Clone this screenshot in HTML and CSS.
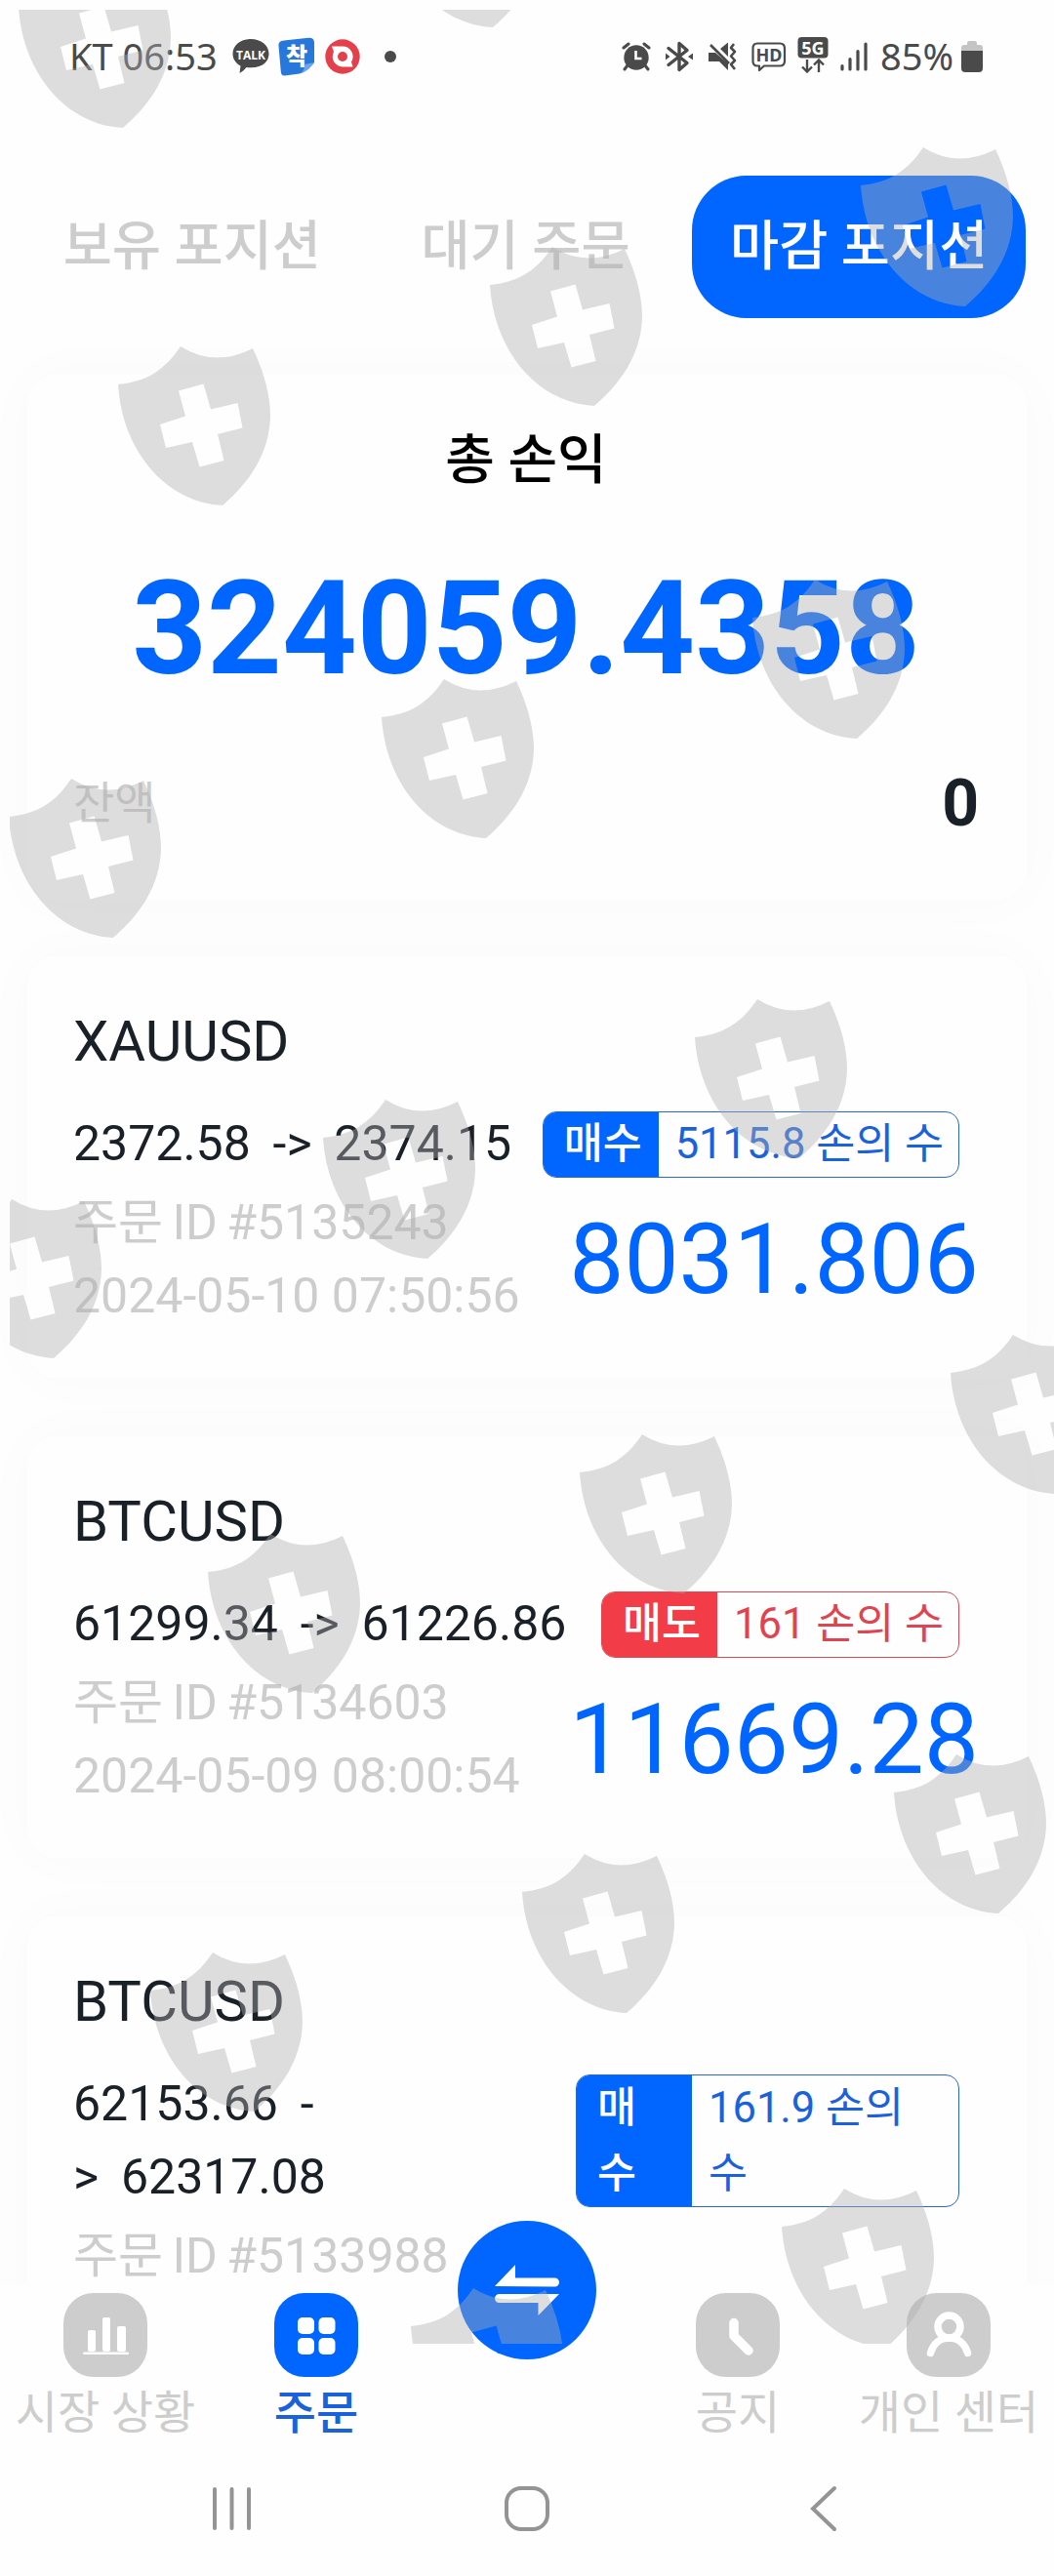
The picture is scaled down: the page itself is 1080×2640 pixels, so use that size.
FILE: index.html
```html
<!DOCTYPE html>
<html lang="ko">
<head>
    <meta charset="UTF-8">
    <meta name="viewport" content="width=device-width, initial-scale=1.0">
    <title>마감 포지션</title>
    <link rel="stylesheet" href="styles.css">
</head>
<body>
    <div class="phone">
        <!-- Status bar -->
        <header class="status-bar">
            <span class="status-time">KT 06:53</span>
            <svg class="ic-talk" width="38" height="38" viewBox="0 0 38 38">
                <path fill="#4a4a4a" d="M19 1C8.500 1 .5 7.500.5 16c0 5.500 3 9.700 8 12.500L7.500 36c2.500-1.500 5-3.500 7-6 16 1.800 23-5.500 23-14C37.500 7.500 29.500 1 19 1z"/>
                <text x="19" y="21.500" class="talk-text">TALK</text>
            </svg>
            <svg class="ic-app" width="38" height="40" viewBox="0 0 38 40">
                <path fill="#2878dc" d="M6 3.500L31 .7c4-.3 6 1.300 6 5V26c-5 6-9 9.500-15 11.500L7 39.500c-3 .2-4-1.500-4.200-4L.5 9C.3 5.500 2 3.900 6 3.500z"/>
                <path fill="#6aa5f0" d="M37 26c-4 6-9 10-15 11.500 4-2 5-5 5.500-9.500z"/>
                <text x="19" y="28" class="app-text">착</text>
            </svg>
            <svg class="ic-red" width="36" height="36" viewBox="0 0 36 36">
                <circle cx="18" cy="18" r="17.700" fill="#e3404c"/>
                <path fill="#fff" d="M7 7.500h11a10.500 10.500 0 0 1 9 16l1.500 5H18A10.500 10.500 0 0 1 9 13z"/>
                <circle cx="18" cy="18" r="5" fill="#e3404c"/>
            </svg>
            <span class="status-dot"></span>
            <div class="status-right">
                <svg class="ic-alarm" width="30" height="30" viewBox="0 0 30 30">
                    <g fill="none" stroke="#4a4a4a" stroke-width="3" stroke-linecap="round">
                        <path d="M2 6l5-4M28 6l-5-4M6 24l-3 4M24 24l3 4"/>
                    </g>
                    <circle cx="15" cy="16" r="12.700" fill="#4a4a4a"/>
                    <path d="M14.500 9v8h6" fill="none" stroke="#fff" stroke-width="2.600"/>
                </svg>
                <svg class="ic-bt" width="28" height="32" viewBox="0 0 28 32">
                    <path d="M3 7.500l19 15-8 7V2.500l8 7-19 15" fill="none" stroke="#4a4a4a" stroke-width="3.400" stroke-linejoin="round" stroke-linecap="round"/>
                    <path fill="#4a4a4a" d="M0 12.500l4.500 3.500L0 19.500zM28 12.500L23 16l5 3.500z"/>
                </svg>
                <svg class="ic-mute" width="31" height="30" viewBox="0 0 31 30">
                    <path fill="#4a4a4a" d="M1 11h7l13 11v7l-9-9H1zM13 7l8-6.500V15z"/>
                    <path d="M3 3l19 19M27 2l-3 4 4 4-4 4.500 4 4.500-4 4 4 5" fill="none" stroke="#4a4a4a" stroke-width="2.600" stroke-linejoin="round"/>
                </svg>
                <svg class="ic-hd" width="36" height="31" viewBox="0 0 36 31">
                    <path d="M6 1.500h23q5 0 5 5v13q0 5-5 5H13l-5 4.500v-4.500H6q-4.500 0-4.500-5v-13q0-5 4.500-5z" fill="none" stroke="#4a4a4a" stroke-width="2.200" stroke-linejoin="round"/>
                    <text x="18" y="20" class="hd-text">HD</text>
                </svg>
                <svg class="ic-5g" width="32" height="37" viewBox="0 0 32 37">
                    <rect x=".5" y="0" width="31" height="21.500" rx="4" fill="#4a4a4a"/>
                    <text x="16" y="17.500" class="g5-text">5G</text>
                    <path d="M10 23v12M5 30.500l5 5 5-5M22 36V24M17 28.500l5-5 5 5" fill="none" stroke="#4a4a4a" stroke-width="2.400"/>
                </svg>
                <svg class="ic-signal" width="28" height="30" viewBox="0 0 28 30">
                    <path d="M2 24.500V28M10 17.500V28M18 9.500V28M26 2V28" stroke="#4a4a4a" stroke-width="3.200" stroke-linecap="round"/>
                </svg>
                <span class="battery-text">85%</span>
                <svg class="ic-battery" width="22" height="32" viewBox="0 0 22 32">
                    <path fill="#c4c4c4" d="M6 2q0-2 2-2h6q2 0 2 2v2h3q3 0 3 3v4H0V7q0-3 3-3h3z"/>
                    <path fill="#4a4a4a" d="M0 10h22v18q0 4-4 4H4q-4 0-4-4z"/>
                </svg>
            </div>
        </header>

        <!-- Tabs -->
        <nav class="tabs">
            <a class="tab">보유 포지션</a>
            <a class="tab">대기 주문</a>
            <a class="tab active">마감 포지션</a>
        </nav>

        <!-- Content -->
        <main class="content">
            <section class="card summary">
                <h1 class="summary-title">총 손익</h1>
                <div class="summary-value">324059.4358</div>
                <div class="summary-row">
                    <span class="summary-label">잔액</span>
                    <span class="summary-balance">0</span>
                </div>
            </section>

            <section class="card order">
                <h2 class="symbol">XAUUSD</h2>
                <div class="order-row">
                    <div class="price">2372.58&nbsp; -&gt;&nbsp; 2374.15</div>
                    <div class="badge buy"><span class="side">매수</span><span class="lots">5115.8 손의 수</span></div>
                </div>
                <div class="order-bottom">
                    <div class="meta"><div class="order-id">주문 ID #5135243</div><div>2024-05-10 07:50:56</div></div>
                    <div class="profit">8031.806</div>
                </div>
            </section>

            <section class="card order">
                <h2 class="symbol">BTCUSD</h2>
                <div class="order-row">
                    <div class="price">61299.34&nbsp; -&gt;&nbsp; 61226.86</div>
                    <div class="badge sell"><span class="side">매도</span><span class="lots">161 손의 수</span></div>
                </div>
                <div class="order-bottom">
                    <div class="meta"><div class="order-id">주문 ID #5134603</div><div>2024-05-09 08:00:54</div></div>
                    <div class="profit">11669.28</div>
                </div>
            </section>

            <section class="card order">
                <h2 class="symbol">BTCUSD</h2>
                <div class="order-row">
                    <div class="price">62153.66&nbsp; -<br>&gt;&nbsp; 62317.08</div>
                    <div class="badge buy tall"><span class="side">매<br>수</span><span class="lots">161.9 손의<br>수</span></div>
                </div>
                <div class="order-bottom">
                    <div class="meta"><div class="order-id">주문 ID #5133988</div></div>
                </div>
            </section>
        </main>

        <!-- Bottom menu -->
        <nav class="menu">
            <a class="menu-item">
                <svg class="menu-icon" viewBox="0 0 86 86">
                    <rect width="86" height="86" rx="31"/>
                    <g fill="#fff">
                        <rect x="25" y="38" width="8" height="22" rx="2"/>
                        <rect x="40" y="25" width="8" height="35" rx="2"/>
                        <rect x="55" y="34" width="9" height="26" rx="2"/>
                        <rect x="20" y="60.500" width="47" height="2.600" rx="1.300"/>
                    </g>
                </svg>
                <span>시장 상황</span>
            </a>
            <a class="menu-item active">
                <svg class="menu-icon" viewBox="0 0 86 86">
                    <rect width="86" height="86" rx="31"/>
                    <g fill="#fff">
                        <rect x="24" y="25" width="17" height="17" rx="5"/>
                        <rect x="45.500" y="25" width="17" height="17" rx="5"/>
                        <rect x="24" y="46" width="17" height="17" rx="5"/>
                        <rect x="45.500" y="46" width="17" height="17" rx="5"/>
                    </g>
                </svg>
                <span>주문</span>
            </a>
            <div class="menu-item">
                <a class="trade-btn">
                    <svg width="68" height="54" viewBox="0 0 68 54">
                        <path fill="#fff" d="M1 23L22 1v13.500h40.500a4.500 4.500 0 0 1 0 9zM67 31L45.500 53V40H5.500a4.500 4.500 0 0 1 0-9z"/>
                    </svg>
                </a>
            </div>
            <a class="menu-item">
                <svg class="menu-icon" viewBox="0 0 86 86">
                    <rect width="86" height="86" rx="31"/>
                    <path d="M39 30.500v13.500l15 15" fill="none" stroke="#fff" stroke-width="9.500" stroke-linecap="round" stroke-linejoin="round"/>
                </svg>
                <span>공지</span>
            </a>
            <a class="menu-item">
                <svg class="menu-icon" viewBox="0 0 86 86">
                    <rect width="86" height="86" rx="31"/>
                    <g fill="none" stroke="#fff" stroke-width="7.500" stroke-linecap="round">
                        <circle cx="43.500" cy="34.500" r="11.500"/>
                        <path d="M24.500 61.500c3-10 10-15.500 19-15.500s16 5.500 19 15.500"/>
                    </g>
                </svg>
                <span>개인 센터</span>
            </a>
        </nav>

        <!-- Android navigation -->
        <footer class="system-nav">
            <svg width="48" height="48" viewBox="0 0 48 48"><path d="M7 4v40M24.500 4v40M42 4v40"/></svg>
            <svg width="48" height="48" viewBox="0 0 48 48"><rect x="3" y="3" width="42" height="42" rx="15"/></svg>
            <svg width="48" height="48" viewBox="0 0 48 48"><path d="M37 3L15 24l22 21"/></svg>
        </footer>

        <!-- Shield watermark over the whole screen -->
        <svg class="watermark" viewBox="10 10 1070 2392">
            <defs>
                <path id="shield" fill-rule="evenodd" d="M64 0Q99 22 138 2Q156 40 156 72C155 110 134 140 107 163C48 160 4 106 0 39C30 36 48 24 64 0zM62 45.500L69 71.500L43 80L49 104L76 98L83.500 123.500L108.500 117L102 90L127.500 83.500L122.500 58L95 64.500L87.500 38.500z"/>
            </defs>
            <use href="#shield" x="19" y="-32"/>
            <use href="#shield" x="398" y="-135"/>
            <use href="#shield" x="882" y="151"/>
            <use href="#shield" x="502" y="253"/>
            <use href="#shield" x="121" y="355"/>
            <use href="#shield" x="771" y="594"/>
            <use href="#shield" x="391" y="696"/>
            <use href="#shield" x="9" y="798"/>
            <use href="#shield" x="712" y="1024"/>
            <use href="#shield" x="331" y="1127"/>
            <use href="#shield" x="-52" y="1229"/>
            <use href="#shield" x="974" y="1368"/>
            <use href="#shield" x="594" y="1470"/>
            <use href="#shield" x="213" y="1572"/>
            <use href="#shield" x="916" y="1798"/>
            <use href="#shield" x="535" y="1900"/>
            <use href="#shield" x="154" y="2001"/>
            <use href="#shield" x="801" y="2243"/>
            <use href="#shield" x="421" y="2345"/>
        </svg>
    </div>
</body>
</html>
```
FILE: styles.css
```css
* {
    box-sizing: border-box;
}
body {
    margin: 0;
    background: #fefefe;
    font-family: Roboto, "Noto Sans CJK KR", sans-serif;
    color: #1a2027;
}
h1, h2 {
    margin: 0;
    font-weight: 400;
}
.phone {
    position: relative;
    width: 1080px;
    height: 2640px;
    overflow: hidden;
    display: flex;
    flex-direction: column;
}

/* Status bar */
.status-bar {
    height: 116px;
    padding: 0 73px 0 71px;
    display: flex;
    align-items: center;
    flex-shrink: 0;
    font-family: "Noto Sans", sans-serif;
    font-size: 38px;
    color: #4a4a4a;
}
.status-time {
    width: 167px;
    line-height: 48px;
    margin-top: -3px;
    white-space: nowrap;
}
.ic-app {
    margin-left: 9px;
}
.ic-red {
    margin-left: 10px;
}
.status-dot {
    width: 12px;
    height: 12px;
    margin-left: 25px;
    border-radius: 50%;
    background: #4a4a4a;
}
.status-right {
    margin-left: auto;
    display: flex;
    align-items: center;
}
.ic-bt {
    margin-left: 15px;
}
.ic-mute {
    margin-left: 15px;
}
.ic-hd {
    margin-left: 14px;
}
.ic-5g {
    margin-left: 11px;
    margin-top: -4px;
}
.ic-signal {
    margin-left: 12px;
}
.battery-text {
    margin-left: 13px;
    margin-top: -3px;
    width: 83px;
    line-height: 48px;
    white-space: nowrap;
}
.talk-text {
    font: 700 12px "Open Sans", sans-serif;
    fill: #fff;
    text-anchor: middle;
}
.app-text {
    font: 900 24px "Noto Sans CJK KR", sans-serif;
    fill: #fff;
    text-anchor: middle;
}
.hd-text {
    font: 700 18px "Noto Sans", sans-serif;
    fill: #4a4a4a;
    text-anchor: middle;
}
.g5-text {
    font: 700 18px "Noto Sans", sans-serif;
    fill: #fff;
    text-anchor: middle;
}

/* Tabs */
.tabs {
    display: flex;
    flex-shrink: 0;
    height: 210px;
    padding: 64px 29px 0 26px;
}
.tab {
    flex: 1;
    height: 146px;
    line-height: 145px;
    border-radius: 56px;
    text-align: center;
    font-size: 54.5px;
    font-weight: 500;
    color: #cdcdcd;
}
.tab.active {
    background: #0066ff;
    color: #fff;
}

/* Cards */
.content {
    height: 2016px;
    padding: 58px 28px 0;
    overflow: hidden;
    flex-shrink: 0;
}
.card {
    background: #fefefe;
    border-radius: 30px;
    padding: 44px 49px 46px 47px;
    margin-bottom: 60px;
    box-shadow: 0 0 60px rgba(0, 0, 0, 0.022);
}
.summary {
    height: 538px;
    margin-bottom: 58px;
}
.summary-title {
    font-size: 55px;
    font-weight: 500;
    line-height: 86px;
    text-align: center;
    color: #000;
}
.summary-value {
    margin-top: 32px;
    font-size: 134px;
    line-height: 198px;
    font-weight: 700;
    text-align: center;
    color: #0066ff;
}
.summary-row {
    margin-top: 30px;
    display: flex;
    justify-content: space-between;
    line-height: 99px;
}
.summary-label {
    font-size: 46px;
    color: #cdcdcd;
}
.summary-balance {
    font-size: 66px;
    font-weight: 700;
}
.symbol {
    font-size: 58px;
    line-height: 87px;
}
.order {
    height: 432px;
}
.order-row {
    margin-top: 24px;
    display: flex;
    justify-content: space-between;
    align-items: center;
    padding-right: 20px;
}
.price {
    font-size: 50px;
    line-height: 75px;
    word-spacing: -1px;
    white-space: nowrap;
}
.badge {
    display: flex;
    border: 1px solid;
    border-radius: 14px;
    overflow: hidden;
    font-size: 43.5px;
    line-height: 66px;
    white-space: nowrap;
}
.badge .side {
    width: 118px;
    padding-left: 21px;
    font-weight: 500;
    color: #fff;
}
.badge .lots {
    padding: 0 15px 0 17px;
}
.badge.buy {
    border-color: #2a68c8;
    color: #1a62dc;
}
.badge.buy .side {
    background: #0066ff;
}
.badge.sell {
    border-color: #d84a56;
    color: #e04450;
}
.badge.sell .side {
    background: #f23c48;
}
.badge.tall {
    width: 393px;
    line-height: 67px;
}
.order-bottom {
    margin-top: 6px;
    display: flex;
    justify-content: space-between;
    align-items: center;
}
.meta {
    font-size: 50px;
    line-height: 75px;
    color: #cdcdcd;
}
.order-id {
    word-spacing: -3px;
}
.profit {
    font-size: 100px;
    line-height: 100px;
    color: #0066ff;
}

/* Bottom menu */
.menu {
    display: flex;
    height: 168px;
    flex-shrink: 0;
    background: #fefefe;
}
.menu-item {
    flex: 1;
    display: flex;
    flex-direction: column;
    align-items: center;
    padding-top: 8px;
    font-size: 47px;
    line-height: 73px;
    color: #cdcdcd;
    white-space: nowrap;
}
.menu-item.active {
    font-weight: 500;
    color: #1a62dc;
}
.menu-icon {
    width: 86px;
    height: 86px;
    flex-shrink: 0;
    fill: #cdcdcd;
}
.menu-item.active .menu-icon {
    fill: #0066ff;
}
.trade-btn {
    width: 142px;
    height: 142px;
    margin-top: -74px;
    border-radius: 50%;
    background: #0066ff;
    display: flex;
    align-items: center;
    justify-content: center;
    position: relative;
}

/* Android navigation */
.system-nav {
    display: flex;
    justify-content: space-between;
    padding: 37px 214px 0 213px;
}
.system-nav svg {
    fill: none;
    stroke: #949494;
    stroke-width: 4;
    stroke-linecap: round;
}

.watermark {
    position: absolute;
    left: 10px;
    top: 10px;
    width: 1070px;
    height: 2392px;
    overflow: hidden;
    fill: rgba(175, 175, 175, 0.41);
    pointer-events: none;
}
```
